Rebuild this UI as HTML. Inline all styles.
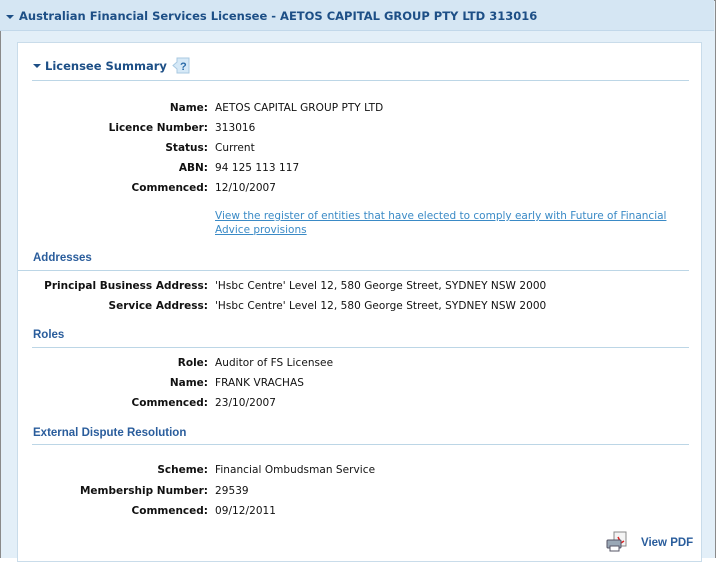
<!DOCTYPE html>
<html><head><style>
*{margin:0;padding:0;box-sizing:border-box}
body{width:716px;height:558px;overflow:hidden;background:#fff;font-family:"DejaVu Sans","Liberation Sans",sans-serif;font-size:10.5px;color:#111}
#outer{position:absolute;left:0;top:0;width:716px;height:558px;border:1px solid #8a8a8a;border-bottom:none;background:#e3eff8}
#hdr{position:absolute;left:0;top:0;width:714px;height:31px;background:#d5e6f3;border-bottom:1px solid #c2d8ea}
#hdr span{position:absolute;left:19px;top:9px;font-weight:bold;font-size:11.5px;color:#1d4f86;letter-spacing:0px}
.tri{position:absolute;width:0;height:0;border-left:4px solid transparent;border-right:4px solid transparent;border-top:4px solid #1d4f86}
#panel{position:absolute;left:17px;top:42px;width:685px;height:520px;background:#fff;border:1px solid #c9dcea}
.a{position:absolute;white-space:nowrap}
.l{position:absolute;right:508px;font-weight:bold;white-space:nowrap;text-align:right}
.v{position:absolute;left:215px;white-space:nowrap;letter-spacing:0.05px}
.h{position:absolute;left:33px;font-weight:bold;color:#2a5d9c;font-family:"Liberation Sans",sans-serif;font-size:11.5px}
.line{position:absolute;left:32px;width:657px;height:1px;background:#bcd6e6}
a{color:#3a8ac6}
</style></head><body>
<div id="outer"></div>
<div id="hdr"><div class="tri" style="left:6px;top:15px"></div><span>Australian Financial Services Licensee - AETOS CAPITAL GROUP PTY LTD 313016</span></div>
<div id="panel"></div>
<div class="tri" style="left:33px;top:64px"></div>
<div class="a" style="left:45px;top:59px;font-weight:bold;font-size:11.5px;color:#1d4f86">Licensee Summary</div>
<svg class="a" style="left:171px;top:57px" width="20" height="18"><path d="M6 1h12v15H6v-4l-4-3.5 4-3.5z" fill="#d6e9f7" stroke="#a9c9e2"/><text x="9" y="13" font-size="11" font-weight="bold" fill="#2a6aa8" font-family="Liberation Sans">?</text></svg>
<div class="line" style="top:80px"></div>
<div class="l" style="top:102px">Name:</div><div class="v" style="top:102px">AETOS CAPITAL GROUP PTY LTD</div>
<div class="l" style="top:122px">Licence Number:</div><div class="v" style="top:122px">313016</div>
<div class="l" style="top:142px">Status:</div><div class="v" style="top:142px">Current</div>
<div class="l" style="top:162px">ABN:</div><div class="v" style="top:162px">94 125 113 117</div>
<div class="l" style="top:182px">Commenced:</div><div class="v" style="top:182px">12/10/2007</div>
<div class="v" style="top:209px;line-height:14px;white-space:normal;width:470px;letter-spacing:0"><a href="#">View the register of entities that have elected to comply early with Future of Financial Advice provisions</a></div>
<div class="line" style="top:270px;left:18px;width:671px"></div>
<div class="h" style="top:252px">Addresses</div>
<div class="l" style="top:280px">Principal Business Address:</div><div class="v" style="top:280px">'Hsbc Centre' Level 12, 580 George Street, SYDNEY NSW 2000</div>
<div class="l" style="top:300px">Service Address:</div><div class="v" style="top:300px">'Hsbc Centre' Level 12, 580 George Street, SYDNEY NSW 2000</div>
<div class="h" style="top:329px">Roles</div>
<div class="line" style="top:347px"></div>
<div class="l" style="top:357px">Role:</div><div class="v" style="top:357px">Auditor of FS Licensee</div>
<div class="l" style="top:377px">Name:</div><div class="v" style="top:377px">FRANK VRACHAS</div>
<div class="l" style="top:397px">Commenced:</div><div class="v" style="top:397px">23/10/2007</div>
<div class="h" style="top:427px">External Dispute Resolution</div>
<div class="line" style="top:444px"></div>
<div class="l" style="top:464px">Scheme:</div><div class="v" style="top:464px">Financial Ombudsman Service</div>
<div class="l" style="top:485px">Membership Number:</div><div class="v" style="top:485px">29539</div>
<div class="l" style="top:505px">Commenced:</div><div class="v" style="top:505px">09/12/2011</div>
<svg class="a" style="left:606px;top:531px" width="26" height="22"><rect x="8" y="1" width="12" height="14" fill="#f4f4f4" stroke="#888"/><path d="M12 6l3 6 3-2" stroke="#d22" fill="none" stroke-width="1.5"/><rect x="1" y="9" width="14" height="8" rx="1" fill="#9aa8b6" stroke="#556"/><rect x="4" y="15" width="9" height="5" fill="#fff" stroke="#556"/></svg>
<div class="a" style="left:641px;top:537px;font-weight:bold;color:#2a5d9c;font-family:'Liberation Sans',sans-serif;font-size:11.5px">View PDF</div>
</body></html>
